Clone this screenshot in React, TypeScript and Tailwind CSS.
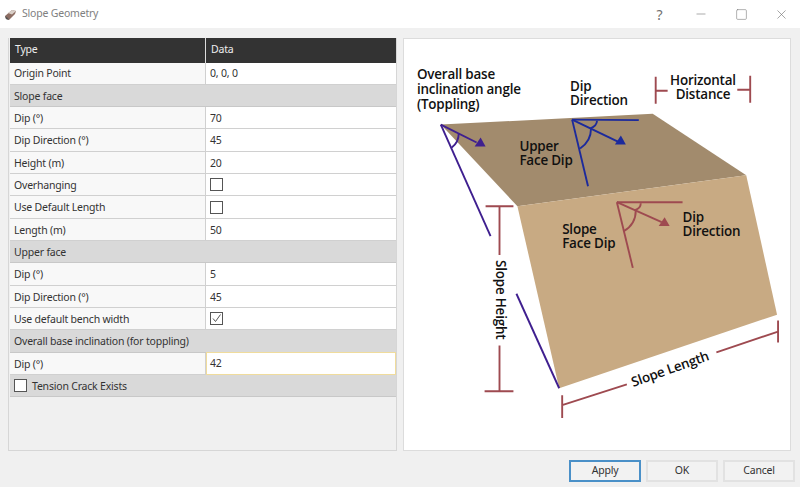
import { X, Minus, Square } from 'lucide-react'

type RowDef =
  | { kind: 'section'; label: string; check?: boolean }
  | { kind: 'text'; label: string; value: string; active?: boolean }
  | { kind: 'check'; label: string; checked: boolean }

const rows: RowDef[] = [
  { kind: 'text', label: 'Origin Point', value: '0, 0, 0' },
  { kind: 'section', label: 'Slope face' },
  { kind: 'text', label: 'Dip (°)', value: '70' },
  { kind: 'text', label: 'Dip Direction (°)', value: '45' },
  { kind: 'text', label: 'Height (m)', value: '20' },
  { kind: 'check', label: 'Overhanging', checked: false },
  { kind: 'check', label: 'Use Default Length', checked: false },
  { kind: 'text', label: 'Length (m)', value: '50' },
  { kind: 'section', label: 'Upper face' },
  { kind: 'text', label: 'Dip (°)', value: '5' },
  { kind: 'text', label: 'Dip Direction (°)', value: '45' },
  { kind: 'check', label: 'Use default bench width', checked: true },
  { kind: 'section', label: 'Overall base inclination (for toppling)' },
  { kind: 'text', label: 'Dip (°)', value: '42', active: true },
  { kind: 'section', label: 'Tension Crack Exists', check: true },
]

function CheckBox({ checked = false }: { checked?: boolean }) {
  return (
    <span className="flex h-[13px] w-[13px] items-center justify-center border border-[#555] bg-white">
      {checked && (
        <svg width="11" height="11" viewBox="0 0 11 11" fill="none" stroke="#555" strokeWidth="1">
          <path d="M2 5.5 L4.5 8.5 L9.5 1.5" />
        </svg>
      )}
    </span>
  )
}

function Row({ row }: { row: RowDef }) {
  if (row.kind === 'section') {
    return (
      <div className="flex h-[22.33px] items-center gap-[5px] border-b border-[#c8c8c8] bg-[#d9d9d9] pl-[4px]">
        {row.check && <CheckBox />}
        <span className="pt-[2px]">{row.label}</span>
      </div>
    )
  }
  return (
    <div className="flex h-[22.33px] border-b border-[#d0d0d0]">
      <div className="flex w-[196px] items-center border-r border-[#d0d0d0] bg-[#f8f8f8] pl-[4px] pt-[2px]">
        {row.label}
      </div>
      {row.kind === 'check' ? (
        <div className="flex flex-1 items-center bg-white pl-[4px]">
          <CheckBox checked={row.checked} />
        </div>
      ) : (
        <div
          className={
            row.active
              ? 'flex flex-1 items-center border border-[#f0dc9c] bg-white pl-[3px] -my-px'
              : 'flex flex-1 items-center bg-white pl-[4px] pt-[2px]'
          }
        >
          {row.value}
        </div>
      )}
    </div>
  )
}

function Diagram() {
  const red = '#9e4a50'
  const blue = '#1c2a9c'
  const purple = '#3f1f8f'
  return (
    <svg
      className="h-full w-full"
      viewBox="403 38 388 413"
      fontFamily="'Open Sans', 'Noto Sans', sans-serif"
      fontSize="13.5"
      fontWeight="600"
      fill="#111"
    >
      <polygon points="440,124 653,113 747,175 517,206" fill="#a28b6d" />
      <polygon points="517,206 747,175 778,315 559,389" fill="#c8aa83" />

      {/* toppling */}
      <g stroke={purple} strokeWidth="1.9" fill="none">
        <path d="M440 124 L490 236" />
        <path d="M516 294 L559 389" />
        <path d="M440 124 L476 142" />
        <path d="M458 133 Q458 142 451 147" />
      </g>
      <polygon points="485,146 474,146 480,137" fill={purple} />

      {/* upper face */}
      <g stroke={blue} strokeWidth="1.9" fill="none">
        <path d="M572 119 L639 119.5" />
        <path d="M572 119 L588 186" />
        <path d="M572 119 L618 141" />
        <path d="M597 120 Q597 125 590 128" />
        <path d="M591 128 Q591 141 580 148" />
      </g>
      <polygon points="626,144 615,144 621,135" fill={blue} />

      {/* slope face */}
      <g stroke={red} strokeWidth="1.9" fill="none">
        <path d="M617 202 L683 202" />
        <path d="M617 202 L633 268" />
        <path d="M617 202 L662 222" />
        <path d="M641 203 Q641 208 635 210" />
        <path d="M636 210 Q636 224 624 231" />
      </g>
      <polygon points="670,226 659,226 665,217" fill={red} />

      {/* dimensions */}
      <g stroke={red} strokeWidth="1.9" fill="none">
        <path d="M656 76 L656 103 M656 90 L668 90" />
        <path d="M751 75 L751 102 M738 89 L751 89" />
        <path d="M485 206 L513 206 M499 206 L499 255" />
        <path d="M499 346 L499 392 M484 392 L513 392" />
        <path d="M562 396 L562 419 M562 406 L627 385" />
        <path d="M717 353 L779 332 M779 321 L779 343" />
      </g>

      <text x="416" y="78">
        Overall base
        <tspan x="416" dy="15">inclination angle</tspan>
        <tspan x="416" dy="15">(Toppling)</tspan>
      </text>
      <text x="570" y="90">
        Dip
        <tspan x="570" dy="14">Direction</tspan>
      </text>
      <text x="703.5" y="84.5" textAnchor="middle">
        Horizontal
        <tspan x="703.5" dy="14">Distance</tspan>
      </text>
      <text x="519" y="151">
        Upper
        <tspan x="519" dy="13.5">Face Dip</tspan>
      </text>
      <text x="683" y="222">
        Dip
        <tspan x="683" dy="13.5">Direction</tspan>
      </text>
      <text x="562" y="234">
        Slope
        <tspan x="562" dy="14">Face Dip</tspan>
      </text>
      <text transform="translate(495 300) rotate(90)" textAnchor="middle">Slope Height</text>
      <text transform="translate(672 374) rotate(-19.5)" textAnchor="middle">Slope Length</text>
    </svg>
  )
}

function Button({ label, primary = false }: { label: string; primary?: boolean }) {
  return (
    <button
      className={
        primary
          ? 'h-[22px] w-[72px] border-2 border-[#4a90c8] bg-[#f2f2f2] text-[#333]'
          : 'h-[22px] w-[72px] border-2 border-[#e2e2e2] bg-[#f2f2f2] text-[#333]'
      }
    >
      {label}
    </button>
  )
}

export default function App() {
  return (
    <div className="flex h-[487px] w-[800px] flex-col overflow-hidden bg-[#f0f0f0] font-['Noto_Sans','Open_Sans',sans-serif] text-[10.5px] tracking-[-0.2px] text-[#333]">
      <div className="flex h-[28px] shrink-0 items-center bg-white pl-[4px]">
        <svg width="13" height="13" viewBox="0 0 13 13" className="mr-[5px]">
          <polygon points="1,8 8,2 12,3 11,6 5,12 2,11" fill="#8d6e63" />
          <polygon points="4,5 8,2 12,3 8,6.5" fill="#d9cfc8" />
          <polygon points="1,8 4,10 5,12 2,11" fill="#555" />
        </svg>
        <span className="text-[10.5px] text-[#808080]">Slope Geometry</span>
        <div className="ml-auto flex items-center text-[#707070]">
          <span className="flex w-[41px] justify-center text-[14px]">?</span>
          <span className="flex w-[41px] justify-center">
            <Minus size={14} strokeWidth={1} />
          </span>
          <span className="flex w-[41px] justify-center">
            <Square size={13} strokeWidth={1} />
          </span>
          <span className="flex w-[38px] justify-center">
            <X size={15} strokeWidth={1} />
          </span>
        </div>
      </div>

      <div className="mt-[10px] flex h-[413px] shrink-0 gap-[6px] pl-[8px] pr-[9px]">
        <div className="w-[389px] border-x border-b border-[#d6d6d6] pl-px">
          <div className="flex h-[24.5px] items-center bg-[#333] text-[#eee]">
            <div className="flex h-full w-[196px] items-center border-r border-[#ddd] pl-[5px]">Type</div>
            <div className="pl-[5px]">Data</div>
          </div>
          {rows.map((row, i) => (
            <Row key={i} row={row} />
          ))}
        </div>
        <div className="flex-1 border border-[#dcdcdc] bg-white">
          <Diagram />
        </div>
      </div>

      <div className="flex justify-end gap-[5px] pr-[5px] pt-[9px]">
        <Button label="Apply" primary />
        <Button label="OK" />
        <Button label="Cancel" />
      </div>
    </div>
  )
}
